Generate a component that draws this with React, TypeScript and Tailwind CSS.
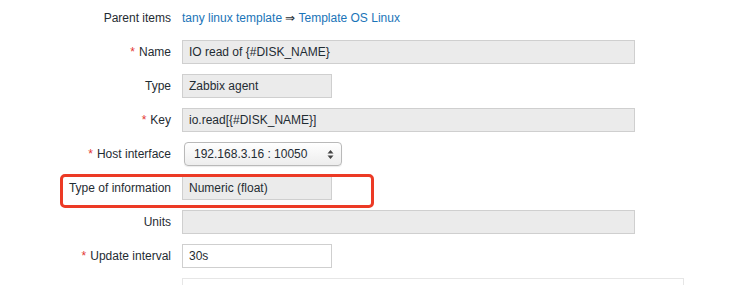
import React from "react";

const Req = () => <span className="text-[#e33734] mr-1">*</span>;

const Label: React.FC<{ req?: boolean; children: React.ReactNode }> = ({ req, children }) => (
  <div className="w-[171px] shrink-0 text-right text-[12px] text-[#1f2c33] leading-6">
    {req && <Req />}
    {children}
  </div>
);

const Field: React.FC<{ value?: string; w: string; white?: boolean }> = ({ value, w, white }) => (
  <div
    className={`${w} h-6 border border-[#cfcfcf] px-[6px] text-[12px] leading-[22px] text-[#1f2c33] ${
      white ? "bg-white border-[#bfbfbf]" : "bg-[#ebebeb]"
    }`}
  >
    {value}
  </div>
);

export default function App() {
  return (
    <div className="w-[735px] h-[285px] overflow-hidden bg-white font-['Liberation_Sans',Arial,sans-serif]">
      <div className="flex flex-col gap-[10px] pt-[6px]">
        <div className="flex items-center gap-[11px] h-6">
          <Label>Parent items</Label>
          <div className="text-[12px] text-[#1a74b8]">
            tany linux template <span className="text-[#1f2c33]">⇒</span> Template OS Linux
          </div>
        </div>
        <div className="flex gap-[11px]">
          <Label req>Name</Label>
          <Field w="w-[453px]" value="IO read of {#DISK_NAME}" />
        </div>
        <div className="flex gap-[11px]">
          <Label>Type</Label>
          <Field w="w-[150px]" value="Zabbix agent" />
        </div>
        <div className="flex gap-[11px]">
          <Label req>Key</Label>
          <Field w="w-[453px]" value="io.read[{#DISK_NAME}]" />
        </div>
        <div className="flex gap-[11px]">
          <Label req>Host interface</Label>
          <div className="ml-[2px] w-[158px] h-6 rounded-[4px] border border-[#b9b9b9] bg-gradient-to-b from-white to-[#ededed] flex items-center justify-between pl-[9px] pr-[7px] text-[12px] text-[#1f2c33] shadow-[0_1px_1px_rgba(0,0,0,0.08)]">
            <span>192.168.3.16 : 10050</span>
            <svg width="7" height="11" viewBox="0 0 7 11">
              <path d="M3.5 1 L6.5 4.5 H0.5 Z" fill="#444" />
              <path d="M3.5 10 L6.5 6.5 H0.5 Z" fill="#444" />
            </svg>
          </div>
        </div>
        <div className="relative flex gap-[11px]">
          <div className="absolute left-[60px] top-[-2px] w-[314px] h-[34px] rounded-[5px] border-[3px] border-[#ec3a25]" />
          <Label>Type of information</Label>
          <Field w="w-[150px]" value="Numeric (float)" />
        </div>
        <div className="flex gap-[11px]">
          <Label>Units</Label>
          <Field w="w-[453px]" />
        </div>
        <div className="flex gap-[11px]">
          <Label req>Update interval</Label>
          <Field w="w-[150px]" value="30s" white />
        </div>
        <div className="flex gap-[11px]">
          <div className="w-[171px] shrink-0" />
          <div className="w-[502px] h-8 border border-[#e6e6e6] bg-white" />
        </div>
      </div>
    </div>
  );
}
